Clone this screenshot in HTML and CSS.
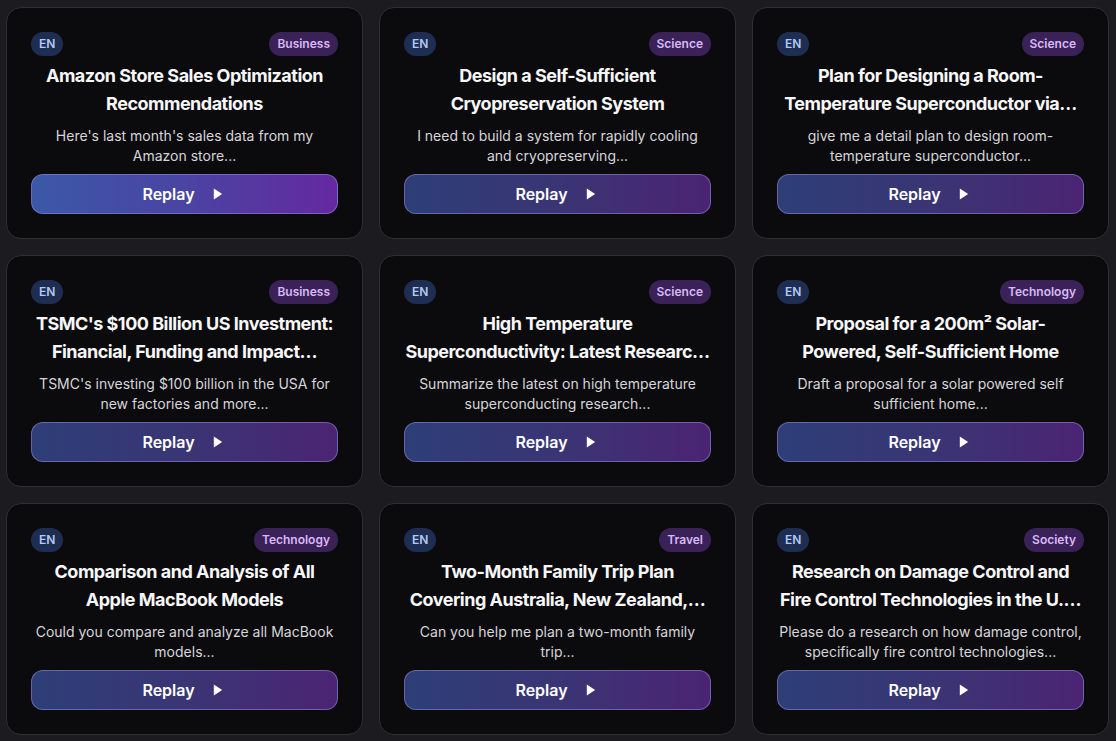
FILE: index.html
```html
<!DOCTYPE html>
<html lang="en">
<head>
<meta charset="utf-8">
<title>Replays</title>
<link rel="stylesheet" href="styles.css">
</head>
<body>
<main class="grid">
  <article class="card">
    <div class="tags"><span class="lang">EN</span><span class="cat">Business</span></div>
    <h2 class="title">Amazon Store Sales Optimization<br>Recommendations</h2>
    <p class="desc">Here's last month's sales data from my Amazon store...</p>
    <button class="replay active">Replay <svg viewBox="0 0 12 14" width="10" height="12"><path d="M1 0.5 L11 7 L1 13.5 Z" fill="#fff"/></svg></button>
  </article>
  <article class="card">
    <div class="tags"><span class="lang">EN</span><span class="cat">Science</span></div>
    <h2 class="title">Design a Self-Sufficient<br>Cryopreservation System</h2>
    <p class="desc">I need to build a system for rapidly cooling and cryopreserving...</p>
    <button class="replay">Replay <svg viewBox="0 0 12 14" width="10" height="12"><path d="M1 0.5 L11 7 L1 13.5 Z" fill="#fff"/></svg></button>
  </article>
  <article class="card">
    <div class="tags"><span class="lang">EN</span><span class="cat">Science</span></div>
    <h2 class="title">Plan for Designing a Room-<br>Temperature Superconductor via…</h2>
    <p class="desc">give me a detail plan to design room-temperature superconductor...</p>
    <button class="replay">Replay <svg viewBox="0 0 12 14" width="10" height="12"><path d="M1 0.5 L11 7 L1 13.5 Z" fill="#fff"/></svg></button>
  </article>
  <article class="card">
    <div class="tags"><span class="lang">EN</span><span class="cat">Business</span></div>
    <h2 class="title">TSMC's $100 Billion US Investment:<br>Financial, Funding and Impact…</h2>
    <p class="desc">TSMC's investing $100 billion in the USA for new factories and more...</p>
    <button class="replay">Replay <svg viewBox="0 0 12 14" width="10" height="12"><path d="M1 0.5 L11 7 L1 13.5 Z" fill="#fff"/></svg></button>
  </article>
  <article class="card">
    <div class="tags"><span class="lang">EN</span><span class="cat">Science</span></div>
    <h2 class="title">High Temperature<br>Superconductivity: Latest Researc…</h2>
    <p class="desc">Summarize the latest on high temperature superconducting research...</p>
    <button class="replay">Replay <svg viewBox="0 0 12 14" width="10" height="12"><path d="M1 0.5 L11 7 L1 13.5 Z" fill="#fff"/></svg></button>
  </article>
  <article class="card">
    <div class="tags"><span class="lang">EN</span><span class="cat">Technology</span></div>
    <h2 class="title">Proposal for a 200m² Solar-<br>Powered, Self-Sufficient Home</h2>
    <p class="desc">Draft a proposal for a solar powered self sufficient home...</p>
    <button class="replay">Replay <svg viewBox="0 0 12 14" width="10" height="12"><path d="M1 0.5 L11 7 L1 13.5 Z" fill="#fff"/></svg></button>
  </article>
  <article class="card">
    <div class="tags"><span class="lang">EN</span><span class="cat">Technology</span></div>
    <h2 class="title">Comparison and Analysis of All<br>Apple MacBook Models</h2>
    <p class="desc">Could you compare and analyze all MacBook models...</p>
    <button class="replay">Replay <svg viewBox="0 0 12 14" width="10" height="12"><path d="M1 0.5 L11 7 L1 13.5 Z" fill="#fff"/></svg></button>
  </article>
  <article class="card">
    <div class="tags"><span class="lang">EN</span><span class="cat">Travel</span></div>
    <h2 class="title">Two-Month Family Trip Plan<br>Covering Australia, New Zealand,…</h2>
    <p class="desc">Can you help me plan a two-month family trip...</p>
    <button class="replay">Replay <svg viewBox="0 0 12 14" width="10" height="12"><path d="M1 0.5 L11 7 L1 13.5 Z" fill="#fff"/></svg></button>
  </article>
  <article class="card">
    <div class="tags"><span class="lang">EN</span><span class="cat">Society</span></div>
    <h2 class="title">Research on Damage Control and<br>Fire Control Technologies in the U.…</h2>
    <p class="desc">Please do a research on how damage control, specifically fire control technologies...</p>
    <button class="replay">Replay <svg viewBox="0 0 12 14" width="10" height="12"><path d="M1 0.5 L11 7 L1 13.5 Z" fill="#fff"/></svg></button>
  </article>
</main>
</body>
</html>
```
FILE: styles.css
```css
* { box-sizing: border-box; }
html, body { margin: 0; padding: 0; }
body {
  background: #1b1b20;
  font-family: Inter, "Liberation Sans", sans-serif;
  color: #f4f4f5;
}
.grid {
  display: grid;
  grid-template-columns: repeat(3, 1fr);
  gap: 16px;
  padding: 7px 7px 7px 6px;
}
.card {
  background: #0b0b0d;
  border: 1px solid #2f2f36;
  border-radius: 15px;
  padding: 24px 24px 23px;
  height: 232px;
  display: flex;
  flex-direction: column;
  align-items: stretch;
}
.tags {
  display: flex;
  justify-content: space-between;
  align-items: center;
  height: 24px;
  flex: none;
}
.lang, .cat {
  height: 24px;
  line-height: 24px;
  border-radius: 12px;
  font-size: 12px;
  font-weight: 600;
  padding: 0 8px;
}
.lang {
  background: #1e2d52;
  color: #b4c8f2;
}
.cat {
  background: #3a2258;
  color: #d9b8f7;
}
.title {
  margin: 6px -6px 0;
  font-size: 18px;
  line-height: 28px;
  height: 56px;
  font-weight: 700;
  text-align: center;
  color: #f7f7f8;
  letter-spacing: -0.5px;
  white-space: nowrap;
  overflow: hidden;
  flex: none;
}
.desc {
  margin: 8px 0 0;
  font-size: 14px;
  line-height: 20px;
  height: 40px;
  text-align: center;
  color: #d6d6da;
  overflow: hidden;
  flex: none;
}
.replay {
  margin-top: 8px;
  height: 40px;
  width: 100%;
  flex: none;
  border-radius: 12px;
  border: 1px solid rgba(150, 140, 215, 0.55);
  background: linear-gradient(90deg, #2d3e77, #3a3574 50%, #4b2473);
  color: #fff;
  font-family: inherit;
  font-size: 16px;
  font-weight: 600;
  display: flex;
  align-items: center;
  justify-content: center;
  gap: 18px;
  cursor: pointer;
  padding: 0 4px 0 0;
}
.replay.active {
  background: linear-gradient(90deg, #3b58a8, #4a44a2 50%, #6528a0);
}
.replay svg { display: block; }
```
